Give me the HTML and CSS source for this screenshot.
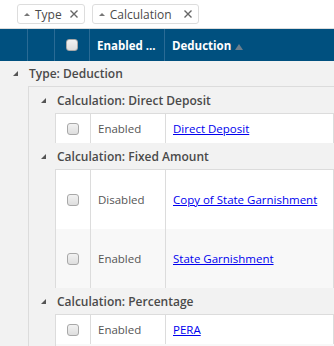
FILE: index.html
```html
<!DOCTYPE html>
<html>
  <head>
    <title>Deductions</title>
    <link rel="stylesheet" href="styles.css">
  </head>
  <body>
    <div class="group-bar">
      <span class="chip"><span class="chip-arrow"></span><span>Type</span><svg class="chip-x" width="8" height="8" viewBox="0 0 8 8"><path d="M0.5 0.5L7.5 7.5M7.5 0.5L0.5 7.5"/></svg></span>
      <span class="chip"><span class="chip-arrow"></span><span>Calculation</span><svg class="chip-x wide" width="8" height="8" viewBox="0 0 8 8"><path d="M0.5 0.5L7.5 7.5M7.5 0.5L0.5 7.5"/></svg></span>
    </div>

    <div class="grid">
      <div class="grid-head">
        <div class="hcell c-ind"></div>
        <div class="hcell c-ind"></div>
        <div class="hcell c-check"><span class="cb"></span></div>
        <div class="hcell c-status">Enabled ...</div>
        <div class="hcell c-name">Deduction <span class="sort-arrow"></span></div>
      </div>

      <div class="group-row lvl1"><span class="tri"></span>Type: Deduction</div>

      <div class="nest">
        <div class="group-row lvl2 first"><span class="tri"></span>Calculation: Direct Deposit</div>
        <div class="data-row">
          <div class="cell c-check"><span class="cb"></span></div>
          <div class="cell c-status">Enabled</div>
          <div class="cell c-name"><a href="#">Direct Deposit</a></div>
        </div>

        <div class="group-row lvl2"><span class="tri"></span>Calculation: Fixed Amount</div>
        <div class="data-row tall">
          <div class="cell c-check"><span class="cb"></span></div>
          <div class="cell c-status">Disabled</div>
          <div class="cell c-name"><a href="#">Copy of State Garnishment</a></div>
        </div>
        <div class="data-row tall alt">
          <div class="cell c-check"><span class="cb"></span></div>
          <div class="cell c-status">Enabled</div>
          <div class="cell c-name"><a href="#">State Garnishment</a></div>
        </div>

        <div class="group-row lvl2"><span class="tri"></span>Calculation: Percentage</div>
        <div class="data-row">
          <div class="cell c-check"><span class="cb"></span></div>
          <div class="cell c-status">Enabled</div>
          <div class="cell c-name"><a href="#">PERA</a></div>
        </div>
        <div class="data-row alt"></div>
      </div>
    </div>
  </body>
</html>
```

FILE: styles.css
```css
* {
  margin: 0;
  padding: 0;
  box-sizing: border-box;
}

body {
  font-family: 'Open Sans', 'Segoe UI', sans-serif;
  font-size: 11.5px;
  color: #555;
  background: #fff;
  overflow: hidden;
}

.group-bar {
  height: 29px;
  padding: 4px 0 0 17px;
  display: flex;
  gap: 7px;
  border-bottom: 1px solid #dcdcdc;
}

.chip {
  height: 20px;
  display: inline-flex;
  align-items: center;
  padding: 0 6px 0 6px;
  border: 1px solid #ddd;
  border-radius: 3px;
  background: #fff;
  color: #4a4a4a;
  font-size: 12px;
}

.chip-arrow {
  width: 0;
  height: 0;
  border-left: 3px solid transparent;
  border-right: 3px solid transparent;
  border-bottom: 3px solid #777;
  margin-right: 5px;
}

.chip-x {
  margin-left: 8px;
  stroke: #666;
  stroke-width: 1.4;
}

.chip-x.wide {
  margin-left: 12px;
}

.grid {
  background: #f2f2f2;
}

.grid-head {
  display: flex;
  height: 32px;
  background: #00507f;
  color: #fff;
  font-weight: 700;
}

.hcell {
  display: flex;
  align-items: center;
  border-right: 1px solid #2a6b95;
  padding-left: 7px;
}

.c-ind {
  width: 27px;
  flex: none;
}

.c-check {
  width: 35px;
  flex: none;
  justify-content: center;
  padding-left: 0;
}

.c-status {
  width: 75px;
  flex: none;
}

.c-name {
  flex: 1;
  border-right: none;
}

.grid-head .c-ind:first-child {
  width: 28px;
}

.sort-arrow {
  width: 0;
  height: 0;
  margin: 3px 0 0 4px;
  border-left: 4px solid transparent;
  border-right: 4px solid transparent;
  border-bottom: 6px solid #6c7e8c;
}

.cb {
  width: 12px;
  height: 12px;
  border: 1px solid #a8a8a8;
  border-radius: 3px;
  background: linear-gradient(#f2f2f2, #dedede);
}

.group-row {
  display: flex;
  align-items: center;
  color: #4a4a4a;
  font-weight: 600;
  font-size: 12px;
  background: #f2f2f2;
}

.lvl1 {
  height: 25px;
  padding-left: 13px;
}

.lvl2 {
  height: 26px;
  padding-left: 12px;
}

.lvl2.first {
  border-top: 1px solid #dcdcdc;
  height: 27px;
}

.tri {
  width: 0;
  height: 0;
  border-left: 5px solid transparent;
  border-bottom: 5px solid #555;
  margin-right: 11px;
}

.nest {
  margin-left: 28px;
  border-left: 1px solid #dcdcdc;
  background: #f2f2f2;
}

.data-row {
  display: flex;
  height: 30px;
  margin-left: 26px;
  background: #fff;
  border-left: 1px solid #dcdcdc;
  border-top: 1px solid #dcdcdc;
}

.data-row.tall {
  height: 60px;
}

.data-row.tall.alt {
  height: 59px;
}

.data-row.alt {
  background: #f8f8f8;
  border-top: none;
}

.cell {
  display: flex;
  align-items: center;
  border-right: 1px solid #dcdcdc;
  padding-left: 7px;
}

.data-row .c-check {
  width: 35px;
  padding-left: 0;
}

a {
  color: #0000ee;
}
```
